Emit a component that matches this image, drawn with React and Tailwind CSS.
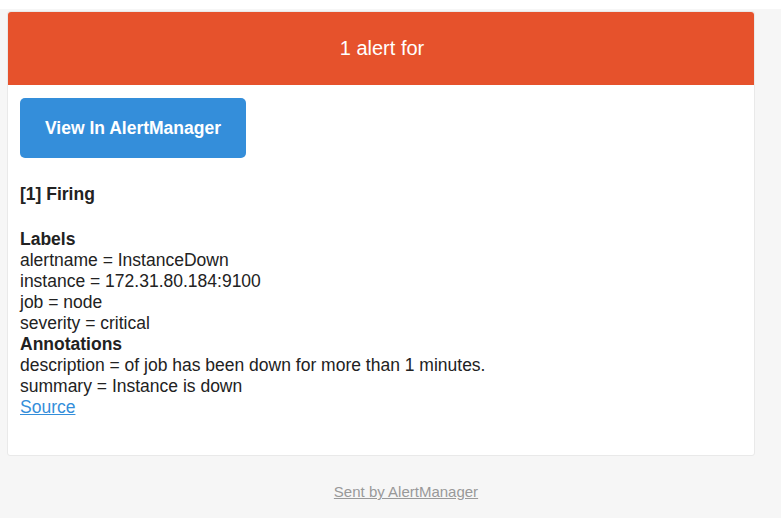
export default function App() {
  return (
    <div className="w-[781px] h-[518px] overflow-hidden bg-[#f6f6f6] font-['Liberation_Sans',Arial,sans-serif] text-[#222]">
      <div className="h-[9px] bg-white" />
      <div className="pt-[2px] pl-[7px] pr-[26px]">
        <div className="border border-[#e9e9e9] rounded-[3px] bg-white">
          <div className="h-[73px] bg-[#E6522C] rounded-t-[3px] flex items-center justify-center pl-[2px] text-white text-[20px] leading-[23px]">
            1 alert for
          </div>
          <div className="pl-[12px] pt-[13px] pb-[37px]">
            <a
              href="#"
              className="inline-flex items-center justify-center w-[226px] h-[60px] rounded-[5px] bg-[#348eda] text-white font-bold text-[17.5px] leading-[35px] no-underline"
            >
              View In AlertManager
            </a>
            <div className="mt-[26px] text-[17.5px] leading-[21px] font-bold">[1] Firing</div>
            <div className="mt-[24px] text-[17.5px] leading-[21px]">
              <div className="font-bold">Labels</div>
              <div>alertname = InstanceDown</div>
              <div>instance = 172.31.80.184:9100</div>
              <div>job = node</div>
              <div>severity = critical</div>
              <div className="font-bold">Annotations</div>
              <div>description = of job has been down for more than 1 minutes.</div>
              <div>summary = Instance is down</div>
              <a href="#" className="text-[#348eda] underline">Source</a>
            </div>
          </div>
        </div>
      </div>
      <div className="mt-[27px] pl-[31px] text-center text-[15px] leading-[17px]">
        <a href="#" className="text-[#999] underline">Sent by AlertManager</a>
      </div>
    </div>
  );
}
